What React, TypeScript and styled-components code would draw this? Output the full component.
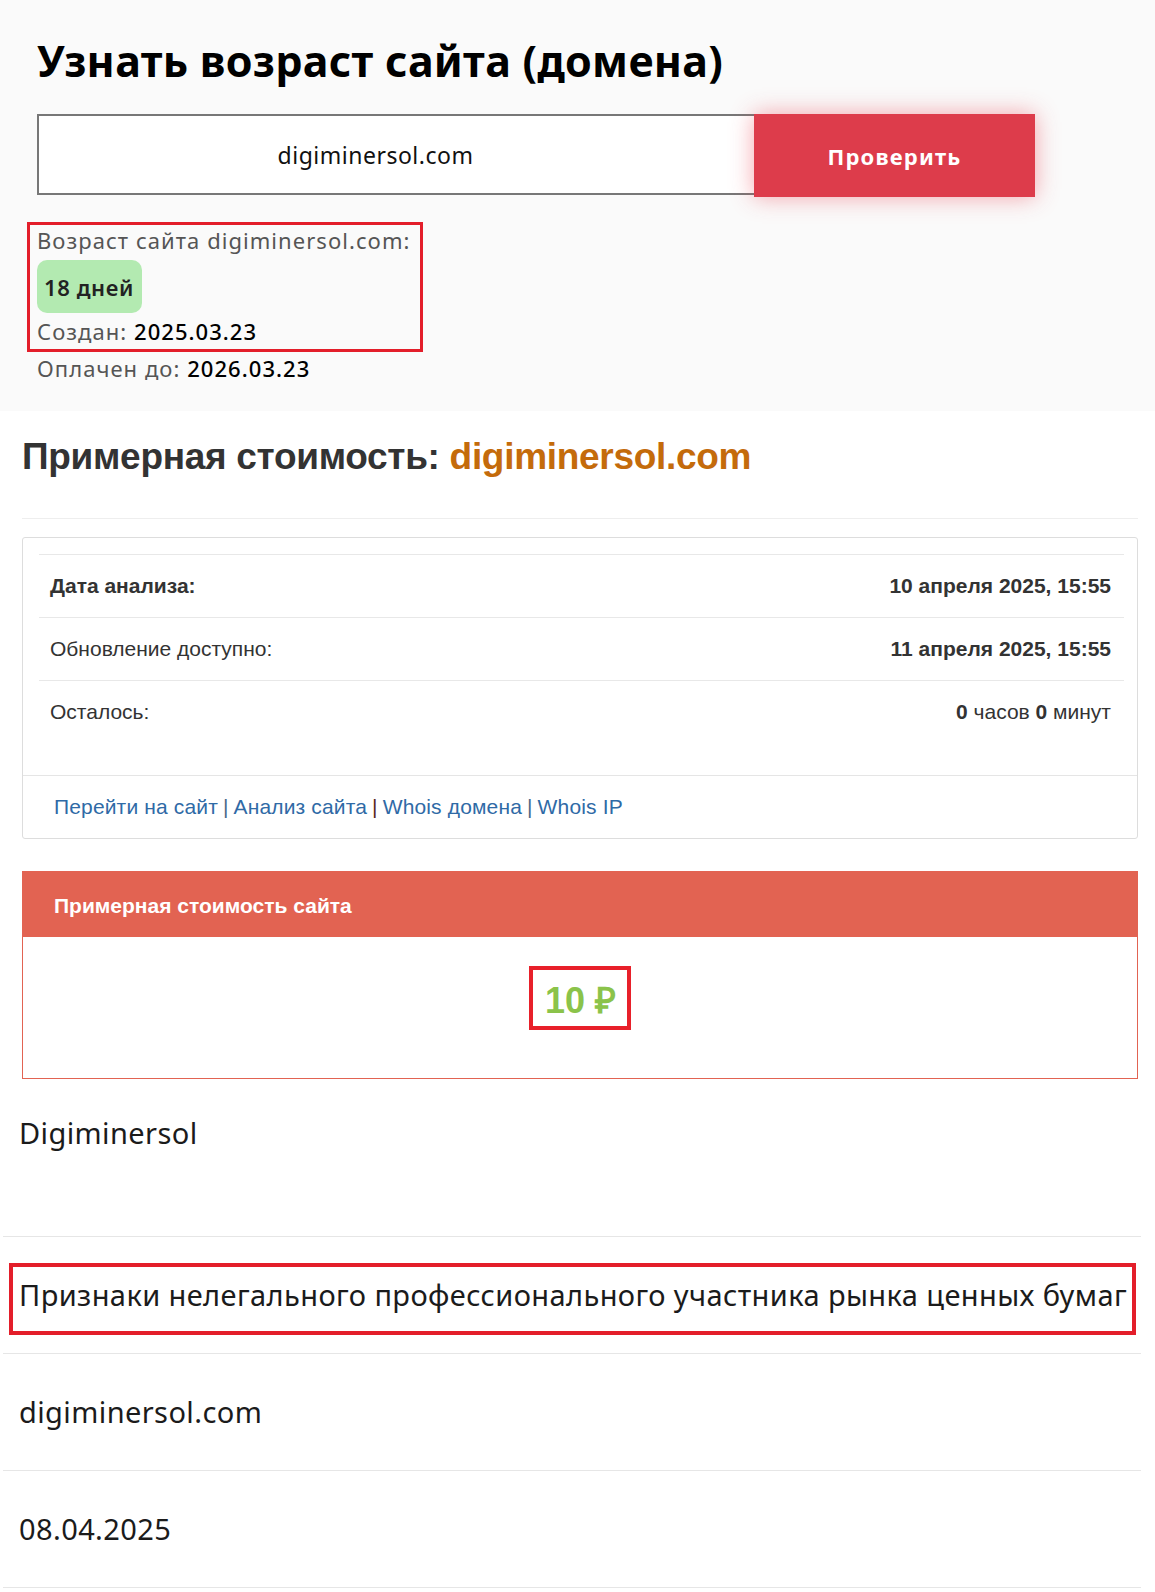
import React from "react"
import styled, { createGlobalStyle } from "styled-components"

const GlobalStyle = createGlobalStyle`
  html, body {
    margin: 0;
    padding: 0;
    background: #ffffff;
  }
  * {
    box-sizing: border-box;
  }
`

const Page = styled.div`
  width: 1155px;
  min-height: 1592px;
  background: #ffffff;
`

// ---- domain age block ----

const AgeSection = styled.section`
  background: #fafafa;
  padding: 35px 37px 28px 37px;
  font-family: "Noto Sans", "DejaVu Sans", sans-serif;
`

const Title = styled.h1`
  margin: 0;
  font-size: 43px;
  line-height: 52px;
  font-weight: 700;
  letter-spacing: 0.3px;
  color: #000;
`

const SearchForm = styled.form`
  display: flex;
  align-items: flex-start;
  margin-top: 27px;
  width: 998px;
  height: 83px;
`

const DomainInput = styled.input`
  flex: 1;
  height: 81px;
  border: 2px solid #777;
  border-right: none;
  background: #fff;
  padding: 0 42px 0 0;
  text-align: center;
  font-family: "Noto Sans", sans-serif;
  font-size: 23px;
  letter-spacing: 0.5px;
  color: #111;
  outline: none;
`

const CheckButton = styled.button`
  width: 281px;
  height: 83px;
  border: none;
  background: #dd3c4b;
  color: #fff;
  font-family: "Noto Sans", sans-serif;
  font-weight: 700;
  font-size: 22px;
  letter-spacing: 1.2px;
  box-shadow: 0 0 22px rgba(234, 60, 75, 0.45);
  cursor: pointer;
`

const ResultBox = styled.div`
  display: inline-flex;
  flex-direction: column;
  align-items: flex-start;
  margin: 25px 0 0 -10px;
  padding: 0 9px 3px 7px;
  border: 3px solid #e31e2a;
`

const InfoLine = styled.div`
  font-size: 22px;
  line-height: 30px;
  letter-spacing: 1.05px;
  color: #555;
`

const Value = styled.span`
  color: #000;
  font-weight: 500;
`

const Badge = styled.span`
  display: inline-flex;
  align-items: center;
  margin: 5px 0 3px;
  height: 53px;
  padding: 0 8px 0 7px;
  border-radius: 10px;
  background: #b3eab1;
  color: #222;
  font-size: 22px;
  letter-spacing: 0.6px;
  font-weight: 600;
`

const PaidLine = styled(InfoLine)`
  margin-top: 1px;
`

// ---- cost block ----

const CostSection = styled.section`
  padding: 24px 17px 0 22px;
  font-family: "Liberation Sans", Arial, sans-serif;
`

const CostTitle = styled.h2`
  margin: 0;
  font-size: 37px;
  line-height: 44px;
  font-weight: 700;
  color: #333;
  letter-spacing: -0.3px;
`

const Domain = styled.span`
  color: #c46b0b;
`

const Divider = styled.hr`
  margin: 39px 0 18px;
  border: none;
  border-top: 1px solid #eee;
`

const Card = styled.div`
  border: 1px solid #ddd;
  border-radius: 3px;
  background: #fff;
`

const InfoTable = styled.div`
  margin: 16px 13px 32px 16px;
`

const TableRow = styled.div<{ $strong?: boolean }>`
  display: flex;
  justify-content: space-between;
  align-items: center;
  height: 63px;
  padding: 0 13px 0 11px;
  border-top: 1px solid #e8e8e8;
  font-size: 21px;
  color: #333;
  font-weight: ${p => (p.$strong ? 700 : 400)};
`

const RowValue = styled.span`
  font-weight: 700;
`

const Light = styled.span`
  font-weight: 400;
`

const CardFooter = styled.div`
  display: flex;
  align-items: center;
  height: 63px;
  padding: 0 0 0 31px;
  border-top: 1px solid #e5e5e5;
  font-size: 21px;
  letter-spacing: 0.15px;
`

const Link = styled.a`
  color: #2f6aa6;
  text-decoration: none;
`

const Sep = styled.span<{ $dark?: boolean }>`
  margin: 0 5px;
  color: ${p => (p.$dark ? "#5a2a20" : "#4a6a8a")};
`

const PricePanel = styled.div`
  margin-top: 32px;
  border: 1px solid #e26352;
  background: #fff;
`

const PriceHeader = styled.div`
  display: flex;
  align-items: center;
  height: 65px;
  padding: 2px 0 0 31px;
  background: #e26352;
  color: #fff;
  font-size: 21px;
  font-weight: 700;
`

const PriceBody = styled.div`
  display: flex;
  justify-content: center;
  align-items: flex-start;
  height: 141px;
  padding-top: 29px;
`

const PriceTag = styled.div`
  display: inline-flex;
  align-items: center;
  height: 64px;
  padding: 3px 11px 0 12px;
  border: 4px solid #e8202a;
  color: #8bc34a;
  font-size: 36px;
  font-weight: 700;
`

// ---- company info list ----

const InfoList = styled.div`
  padding: 0 14px 0 3px;
  font-family: "Noto Sans", "DejaVu Sans", sans-serif;
`

const ListRow = styled.div<{ $tall?: boolean }>`
  padding: ${p => (p.$tall ? "35px 16px 84px" : "39px 16px 39px")};
  border-bottom: 1px solid #e6e6e6;
  font-size: 29px;
  line-height: 38px;
  letter-spacing: 0.4px;
  color: #1b1b1b;
`

const Marked = styled.div`
  margin: -13px -11px -21px -10px;
  padding: 9px 7px 17px 6px;
  border: 4px solid #e31e2a;
  white-space: nowrap;
`

export default function App() {
  return (
    <Page>
      <GlobalStyle />
      <AgeSection>
        <Title>Узнать возраст сайта (домена)</Title>
        <SearchForm onSubmit={e => e.preventDefault()}>
          <DomainInput defaultValue="digiminersol.com" />
          <CheckButton type="submit">Проверить</CheckButton>
        </SearchForm>
        <ResultBox>
          <InfoLine>Возраст сайта digiminersol.com:</InfoLine>
          <Badge>18 дней</Badge>
          <InfoLine>
            Создан: <Value>2025.03.23</Value>
          </InfoLine>
        </ResultBox>
        <PaidLine>
          Оплачен до: <Value>2026.03.23</Value>
        </PaidLine>
      </AgeSection>

      <CostSection>
        <CostTitle>
          Примерная стоимость: <Domain>digiminersol.com</Domain>
        </CostTitle>
        <Divider />
        <Card>
          <InfoTable>
            <TableRow $strong>
              <span>Дата анализа:</span>
              <RowValue>10 апреля 2025, 15:55</RowValue>
            </TableRow>
            <TableRow>
              <span>Обновление доступно:</span>
              <RowValue>11 апреля 2025, 15:55</RowValue>
            </TableRow>
            <TableRow>
              <span>Осталось:</span>
              <RowValue>
                0 <Light>часов</Light> 0 <Light>минут</Light>
              </RowValue>
            </TableRow>
          </InfoTable>
          <CardFooter>
            <Link href="#">Перейти на сайт</Link>
            <Sep>|</Sep>
            <Link href="#">Анализ сайта</Link>
            <Sep $dark>|</Sep>
            <Link href="#">Whois домена</Link>
            <Sep>|</Sep>
            <Link href="#">Whois IP</Link>
          </CardFooter>
        </Card>
        <PricePanel>
          <PriceHeader>Примерная стоимость сайта</PriceHeader>
          <PriceBody>
            <PriceTag>10 ₽</PriceTag>
          </PriceBody>
        </PricePanel>
      </CostSection>

      <InfoList>
        <ListRow $tall>Digiminersol</ListRow>
        <ListRow>
          <Marked>Признаки нелегального профессионального участника рынка ценных бумаг</Marked>
        </ListRow>
        <ListRow>digiminersol.com</ListRow>
        <ListRow>08.04.2025</ListRow>
      </InfoList>
    </Page>
  )
}
